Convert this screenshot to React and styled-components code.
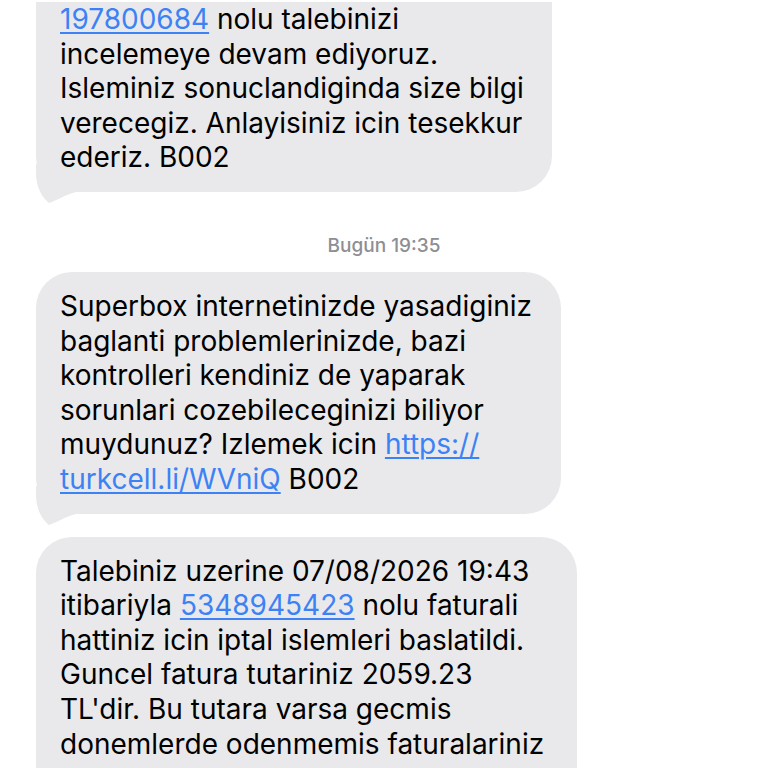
import styled, { createGlobalStyle } from 'styled-components'

const Global = createGlobalStyle`
  html, body {
    margin: 0;
    padding: 0;
    background: #fff;
    height: 768px;
    overflow: hidden;
  }
  body {
    font-family: Inter, "Noto Sans", "Liberation Sans", sans-serif;
    -webkit-font-smoothing: antialiased;
  }
`

const Thread = styled.main`
  display: flex;
  flex-direction: column;
  align-items: flex-start;
  padding: 2px 0 0 36px;
`

const Bubble = styled.div`
  position: relative;
  box-sizing: border-box;
  width: ${p => p.$w}px;
  background: #e9e9eb;
  color: #000;
  font-size: 28px;
  line-height: 34.6px;
  letter-spacing: 0;
  padding: ${p => (p.$cutTop ? '0' : '17px')} 18px ${p => (p.$cutBottom ? '80px' : '17px')} 24px;
  border-radius: ${p => (p.$cutTop ? '0 0 36px 36px' : '36px')};
  margin-top: ${p => p.$gap || 0}px;
`

const Text = styled.p`
  position: relative;
  z-index: 1;
  margin: 0;
`

const Tail = styled.svg`
  position: absolute;
  z-index: 0;
  left: 0;
  bottom: -12px;
  width: 40px;
  height: 40px;
`

const Link = styled.a`
  color: #3c82f5;
  text-decoration: underline;
  text-decoration-thickness: 1.5px;
  text-underline-offset: 3px;
`

const Stamp = styled.div`
  align-self: stretch;
  margin: 41px 0 13px -36px;
  text-align: center;
  font-size: 19px;
  font-weight: 500;
  color: #8e8e93;
  line-height: 26px;
`

const BubbleTail = () => (
  <Tail viewBox="0 0 40 40">
    <path d="M0 0 L0 8 C0 24 6 33 13 39 C20 37 28 31 40 28 L40 0 Z" fill="#e9e9eb" />
  </Tail>
)

export default function App() {
  return (
    <>
      <Global />
      <Thread>
        <Bubble $w={516} $cutTop>
          <BubbleTail />
          <Text>
            <Link>197800684</Link> nolu talebinizi<br />
            incelemeye devam ediyoruz.<br />
            Isleminiz sonuclandiginda size bilgi<br />
            verecegiz. Anlayisiniz icin tesekkur<br />
            ederiz. B002
          </Text>
        </Bubble>
        <Stamp>Bugün 19:35</Stamp>
        <Bubble $w={525}>
          <BubbleTail />
          <Text>
            Superbox internetinizde yasadiginiz<br />
            baglanti problemlerinizde, bazi<br />
            kontrolleri kendiniz de yaparak<br />
            sorunlari cozebileceginizi biliyor<br />
            muydunuz? Izlemek icin <Link>https://</Link><br />
            <Link>turkcell.li/WVniQ</Link> B002
          </Text>
        </Bubble>
        <Bubble $w={541} $gap={23} $cutBottom>
          <Text>
            Talebiniz uzerine 07/08/2026 19:43<br />
            itibariyla <Link>5348945423</Link> nolu faturali<br />
            hattiniz icin iptal islemleri baslatildi.<br />
            Guncel fatura tutariniz 2059.23<br />
            TL'dir. Bu tutara varsa gecmis<br />
            donemlerde odenmemis faturalariniz
          </Text>
        </Bubble>
      </Thread>
    </>
  )
}
